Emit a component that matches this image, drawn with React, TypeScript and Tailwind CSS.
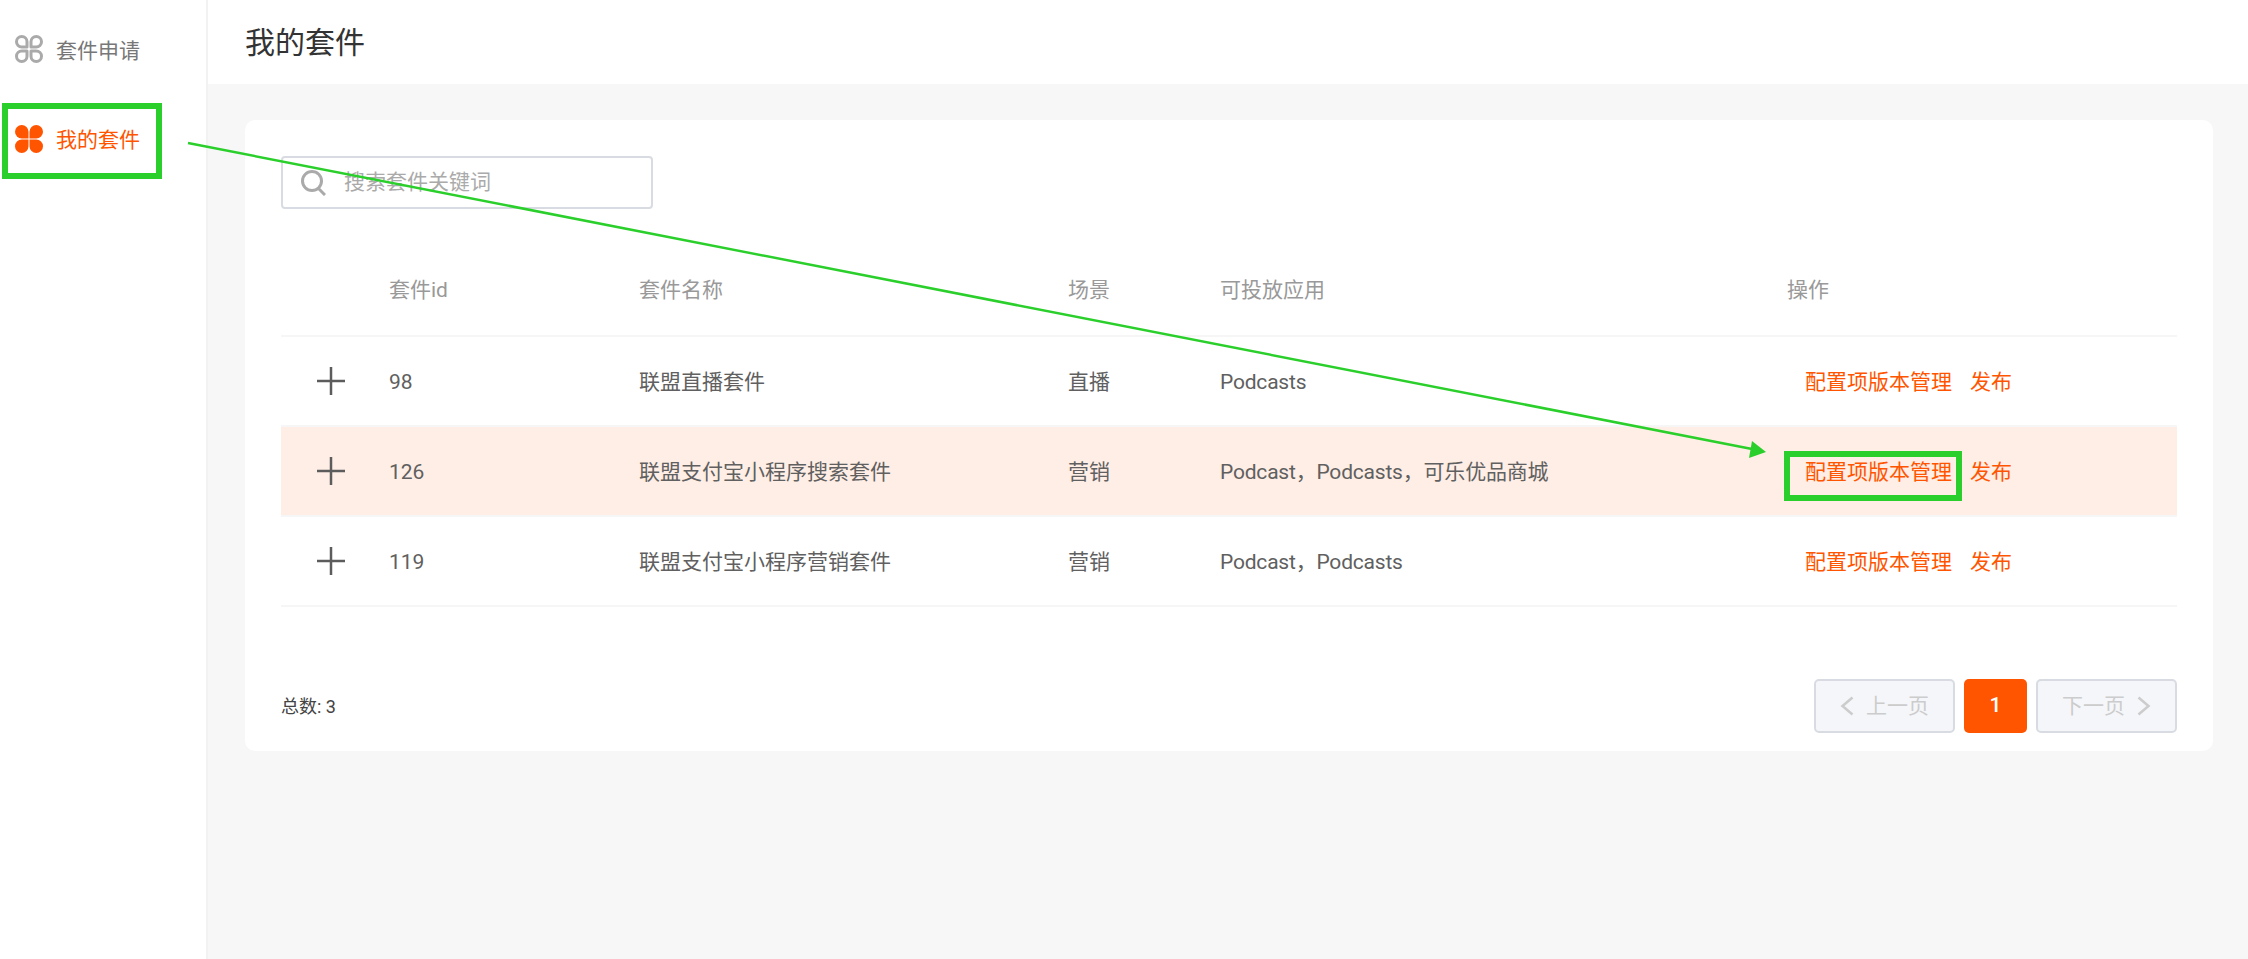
const orange = "#ff5500";
const columns = "grid-cols-[108px_250px_429px_152px_567px_390px]";

const rows = [
  { id: "98", name: "联盟直播套件", scene: "直播", apps: "Podcasts" },
  { id: "126", name: "联盟支付宝小程序搜索套件", scene: "营销", apps: "Podcast，Podcasts，可乐优品商城", active: true },
  { id: "119", name: "联盟支付宝小程序营销套件", scene: "营销", apps: "Podcast，Podcasts" },
];

function Clover({ filled }: { filled?: boolean }) {
  if (filled) {
    return (
      <svg width="28" height="28" viewBox="0 0 28 28" className="shrink-0" fill={orange}>
        <path d="M13.500 13.500H6.750a6.750 6.750 0 1 1 6.750-6.750Z" />
        <path d="M14.500 13.500h6.750a6.750 6.750 0 1 0-6.750-6.750Z" />
        <path d="M13.500 14.500H6.750a6.750 6.750 0 1 0 6.750 6.750Z" />
        <path d="M14.500 14.500h6.750a6.750 6.750 0 1 1-6.750 6.750Z" />
      </svg>
    );
  }
  return (
    <svg width="28" height="28" viewBox="0 0 28 28" className="shrink-0" fill="none" stroke="#aaaaaa" strokeWidth="3" strokeLinejoin="round">
      <path d="M12 12H6.750a5.250 5.250 0 1 1 5.250-5.250Z" />
      <path d="M16 12h5.250a5.250 5.250 0 1 0-5.250-5.250Z" />
      <path d="M12 16H6.750a5.250 5.250 0 1 0 5.250 5.250Z" />
      <path d="M16 16h5.250a5.250 5.250 0 1 1-5.250 5.250Z" />
    </svg>
  );
}

function Plus() {
  return (
    <svg width="28" height="28" viewBox="0 0 28 28" stroke="#5c5c5c" strokeWidth="2.500">
      <path d="M0 14h28M14 0v28" />
    </svg>
  );
}

function Chevron({ dir }: { dir: "left" | "right" }) {
  return (
    <svg width="14" height="20" viewBox="0 0 14 20" fill="none" stroke="#cccccc" strokeWidth="2.500">
      <path d={dir === "left" ? "M12.500 1.500 2.500 10l10 8.500" : "M1.500 1.500 11.500 10l-10 8.500"} />
    </svg>
  );
}

export default function App() {
  return (
    <div className="relative flex h-[959px] w-[2248px] overflow-hidden bg-[#f7f7f7] font-['Roboto','Noto_Sans_CJK_SC',sans-serif] text-[21px] text-[#606060]">
      <aside className="w-[208px] shrink-0 border-r-2 border-[#f2f2f2] bg-white pt-[14px]">
        <div className="flex h-[70px] items-center gap-[13px] pl-[15px] text-[#777777]">
          <Clover />
          <span className="pt-[5px]">套件申请</span>
        </div>
        <div className="mt-[17px] flex h-[76px] items-center gap-[13px] pl-[15px] text-[#ff5500]">
          <Clover filled />
          <span className="pt-[4px]">我的套件</span>
        </div>
      </aside>

      <main className="flex-1">
        <header className="flex h-[84px] items-center bg-white pl-[37px] text-[30px] text-[#333333]">我的套件</header>

        <section className="ml-[37px] mr-[35px] mt-[36px] h-[631px] rounded-[10px] bg-white pl-[36px] pr-[36px] pt-[36px]">
          <div className="flex h-[53px] w-[372px] items-center gap-[18px] rounded-[4px] border-2 border-[#d8dce2] pl-[18px] text-[#aaaaaa]">
            <svg width="25" height="26" viewBox="0 0 25 26" fill="none" stroke="#aaaaaa" strokeWidth="3">
              <circle cx="11" cy="11" r="9.500" />
              <path d="M17.500 18.500l6.500 6.500" />
            </svg>
            搜索套件关键词
          </div>

          <div className={`mt-[35px] grid h-[93px] ${columns} items-center border-b-2 border-[#f6f6f6] text-[#999999]`}>
            <span />
            <span className="pt-[2px]">套件id</span>
            <span className="pt-[2px]">套件名称</span>
            <span className="pt-[2px]">场景</span>
            <span className="pt-[2px]">可投放应用</span>
            <span className="pt-[2px]">操作</span>
          </div>

          {rows.map((r) => (
            <div
              key={r.id}
              className={`grid h-[90px] ${columns} items-center border-b-2 border-[#f6f6f6] ${
                r.active ? "bg-[#ffeee6]" : ""
              }`}
            >
              <span className="flex pl-[36px]">
                <Plus />
              </span>
              <span className="pt-[4px]">{r.id}</span>
              <span className="pt-[4px]">{r.name}</span>
              <span className="pt-[4px]">{r.scene}</span>
              <span className="pt-[4px] tracking-[-0.2px]">{r.apps}</span>
              <span className="flex gap-[18px] pl-[18px] pt-[4px] text-[#ff5500]">
                <span>配置项版本管理</span>
                <span>发布</span>
              </span>
            </div>
          ))}

          <div className="mt-[72px] flex items-center justify-between">
            <span className="text-[18px] text-[#444444]">总数: 3</span>
            <div className="flex gap-[9px]">
              <div className="flex h-[54px] w-[141px] items-center justify-center gap-[12px] rounded-[5px] border-2 border-[#d8dce2] bg-[#f5f6f9] text-[#cccccc]">
                <Chevron dir="left" />
                <span className="pt-[2px]">上一页</span>
              </div>
              <div className="flex h-[54px] w-[63px] items-center justify-center rounded-[5px] bg-[#ff5500] font-medium text-white">1</div>
              <div className="flex h-[54px] w-[141px] items-center justify-center gap-[12px] rounded-[5px] border-2 border-[#d8dce2] bg-[#f5f6f9] text-[#cccccc]">
                <span className="pt-[2px]">下一页</span>
                <Chevron dir="right" />
              </div>
            </div>
          </div>
        </section>
      </main>

      {/* annotations drawn over the screenshot */}
      <div className="absolute left-[2px] top-[103px] h-[76px] w-[160px] border-[6px] border-[#2bcf2b]" />
      <div className="absolute left-[1784px] top-[451px] h-[50px] w-[178px] border-[6px] border-[#2bcf2b]" />
      <svg className="pointer-events-none absolute left-0 top-0" width="2248" height="959">
        <path d="M188 143 1752 449" stroke="#2bcf2b" strokeWidth="2.500" />
        <path d="M1766 452 1752 441 1749 458Z" fill="#2bcf2b" />
      </svg>
    </div>
  );
}
